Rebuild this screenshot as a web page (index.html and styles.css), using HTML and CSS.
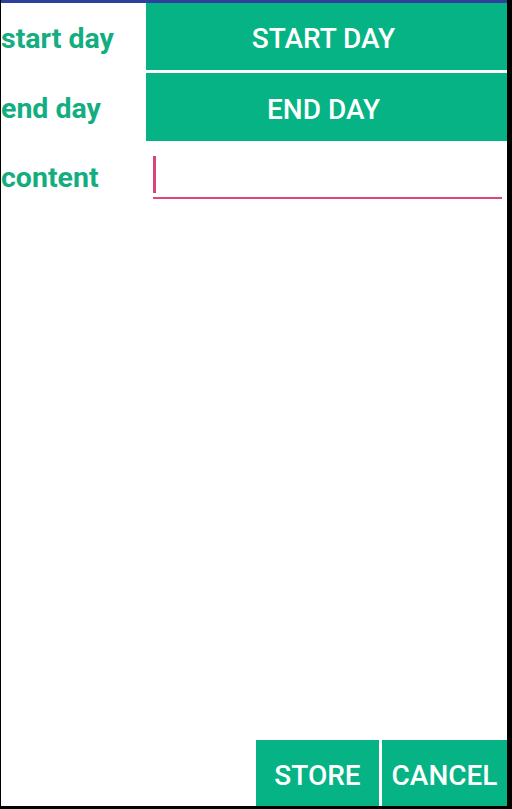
FILE: index.html
```html
<!DOCTYPE html>
<html>
<head>
<meta charset="utf-8">
<link rel="stylesheet" href="styles.css">
</head>
<body>
<div class="frame">
  <div class="screen">
    <div class="form">
      <div class="label row1">start day</div>
      <button class="btn top row1">START DAY</button>
      <div class="label row2">end day</div>
      <button class="btn top row2">END DAY</button>
      <div class="label row3">content</div>
      <div class="field row3"><span class="caret"></span></div>
    </div>
    <div class="actions">
      <button class="btn store">STORE</button>
      <button class="btn cancel">CANCEL</button>
    </div>
  </div>
</div>
</body>
</html>
```
FILE: styles.css
```css
html, body {
  margin: 0;
  padding: 0;
  background: #000;
}
.frame {
  width: 512px;
  height: 809px;
  box-sizing: border-box;
  padding: 0 5px 3px 1px;
  background: #000;
}
.screen {
  height: 100%;
  box-sizing: border-box;
  background: #fff;
  border-top: 3px solid #2f3f9c;
  display: flex;
  flex-direction: column;
  font-family: Roboto, "Liberation Sans", sans-serif;
}
.form {
  display: grid;
  grid-template-columns: 145px 1fr;
  grid-template-rows: 67px 68px 58px;
  row-gap: 3px;
  flex: 1;
  align-content: start;
}
.label {
  color: #13ad7f;
  font-weight: 700;
  font-size: 28.5px;
  display: flex;
  align-items: center;
  padding-top: 3px;
}
.btn {
  border: none;
  margin: 0;
  padding: 4px 0 0;
  background: #05b384;
  color: #fff;
  font-family: Roboto, "Liberation Sans", sans-serif;
  font-weight: 500;
  font-size: 28px;
  text-align: center;
}
.top {
  padding-right: 6px;
}
.row3.label {
  padding-top: 8px;
}
.field {
  margin: 12px 5px 0 7px;
  border-bottom: 2px solid #e0457d;
  height: 41px;
  box-sizing: content-box;
  position: relative;
}
.caret {
  position: absolute;
  left: 0;
  top: 0;
  width: 3px;
  height: 37px;
  background: #d9447c;
}
.actions {
  display: flex;
  justify-content: flex-end;
  gap: 3px;
  height: 66px;
}
.store {
  width: 123px;
}
.cancel {
  width: 125px;
}
```
